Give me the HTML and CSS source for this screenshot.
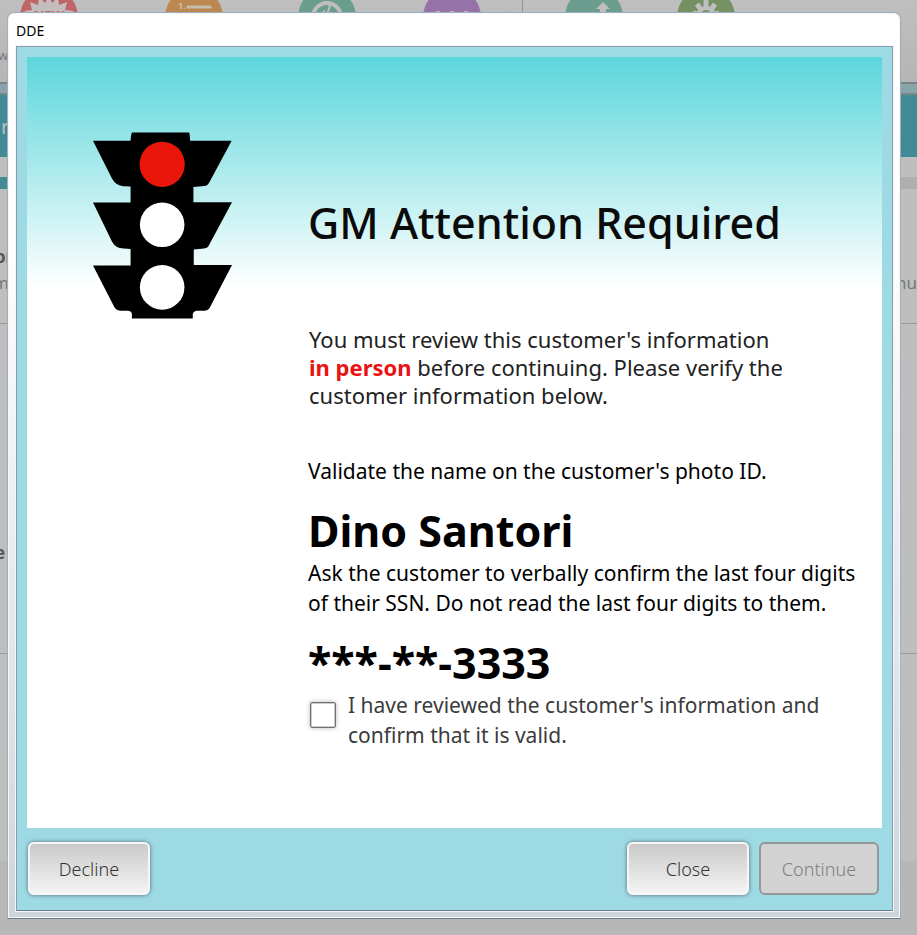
FILE: index.html
```html
<!DOCTYPE html>
<html lang="en">
<head>
<meta charset="utf-8">
<title>DDE</title>
<link rel="stylesheet" href="styles.css">
</head>
<body>
<div class="backdrop" aria-hidden="true">
  <div class="toolbar">
    <div class="tools">
      <svg class="tool" viewBox="0 0 58 58"><circle cx="29" cy="29" r="29" fill="#bf6467"/><path d="M29 8l3 7 6-6 1 8 8-3-2 8 9 1-7 5 7 6-50 0 7-6-7-5 8-1-2-8 8 3 1-8 6 6z" fill="#c4bdbd"/><text x="29" y="32" text-anchor="middle" class="new">NEW</text></svg>
      <svg class="tool" viewBox="0 0 58 58"><circle cx="29" cy="29" r="29" fill="#bd8850"/><text x="13" y="21" class="num">1.</text><path d="M23 19h22M23 31h22" stroke="#c4bdb0" stroke-width="3" stroke-linecap="round"/><text x="13" y="32" class="num">2.</text></svg>
      <svg class="tool" viewBox="0 0 58 58"><circle cx="29" cy="29" r="29" fill="#6b9d8e"/><circle cx="29" cy="29" r="14" fill="none" stroke="#bebebe" stroke-width="4"/><path d="M32 18l-4 11M30 17l3-1M27 23l-2 1" stroke="#bebebe" stroke-width="2"/></svg>
      <svg class="tool" viewBox="0 0 58 58"><circle cx="29" cy="29" r="29" fill="#9672a8"/><g fill="#bebebe"><circle cx="15" cy="28" r="5"/><circle cx="29" cy="28" r="5"/><circle cx="43" cy="28" r="5"/></g></svg>
    </div>
    <div class="tools more">
      <svg class="tool" viewBox="0 0 58 58"><circle cx="29" cy="29" r="29" fill="#6b9d8e"/><path d="M38 14l7 7h-4v12h-6v-12h-4z" fill="#bebebe"/></svg>
      <svg class="tool" viewBox="0 0 58 58"><circle cx="29" cy="29" r="29" fill="#759163"/><circle cx="29" cy="28" r="10" fill="#bebebe"/><path d="M29 10v10M20 16l4 6M38 16l-4 6M16 25l8 2M42 25l-8 2" stroke="#bebebe" stroke-width="5"/><circle cx="29" cy="27" r="5" fill="#759163"/></svg>
    </div>
    <span class="tool-name">w</span>
  </div>
  <div class="stripe"></div>
  <div class="banner">r</div>
  <div class="progress"><span></span></div>
  <div class="section first">
    <strong>or</strong>
    <p><span>m</span><span>nu</span></p>
  </div>
  <div class="section second"><strong>e</strong></div>
  <div class="section third"></div>
  <div class="bottom"></div>
</div>

<div class="window" role="dialog" aria-labelledby="window-title">
  <header class="title" id="window-title">DDE</header>
  <div class="frame">
    <main class="sheet">
      <svg class="light" viewBox="38 36 418 562" role="img" aria-label="Red traffic light">
        <path d="M155 37H327Q329 39 330 62H455L388 187Q383 198 372 198L340 201V247H456L387 376Q383 386 372 386L341 389V436H456L389 564Q383 574 370 573H352Q340 573 338 584V597H155V584Q154 573 143 573H122Q108 573 102 562L38 437H151V388L130 386Q106 386 95 365L38 248H151V200L130 199Q107 198 95 176L38 62H151Q151 46 155 37Z"/>
        <circle cx="246" cy="133" r="68" fill="#ea160b"/>
        <circle cx="246" cy="315" r="67" fill="#fff"/>
        <circle cx="246" cy="503" r="67" fill="#fff"/>
      </svg>
      <div class="copy">
        <h1>GM Attention Required</h1>
        <p class="intro">You must review this customer's information<br><b>in person</b> before continuing. Please verify the<br>customer information below.</p>
        <p class="ask">Validate the name on the customer's photo ID.</p>
        <p class="value">Dino Santori</p>
        <p class="ask">Ask the customer to verbally confirm the last four digits<br>of their SSN. Do not read the last four digits to them.</p>
        <p class="value">***-**-3333</p>
        <div class="confirm">
          <input type="checkbox" id="reviewed">
          <label for="reviewed">I have reviewed the customer's information and<br>confirm that it is valid.</label>
        </div>
      </div>
    </main>
    <footer class="actions">
      <button type="button" class="decline">Decline</button>
      <button type="button">Close</button>
      <button type="button" disabled>Continue</button>
    </footer>
  </div>
</div>
</body>
</html>
```

FILE: styles.css
```css
* { box-sizing: border-box; }

html, body { height: 100%; }

body {
  margin: 0;
  font-family: "Noto Sans", "Open Sans", sans-serif;
  background: #b7b7b7;
  overflow: hidden;
}

h1, p { margin: 0; font-weight: 400; }

.backdrop {
  display: flex;
  flex-direction: column;
  height: 100%;
  background: #bebebe;
  color: #777;
}

.toolbar {
  display: flex;
  position: relative;
  height: 82px;
  flex: none;
  padding-left: 20px;
  background: linear-gradient(#bfbfbf, #b5b5b5);
}
.tools {
  display: grid;
  grid-template-columns: 145px 133px 125px 99px;
  flex: none;
  margin-top: -12px;
}
.tools.more {
  grid-template-columns: 112px 58px;
  border-left: 1px solid #929292;
  padding-left: 42px;
}
.tool { width: 58px; height: 58px; }
.new { font-size: 13px; font-weight: 700; fill: #bf6467; }
.num { font-size: 9px; font-weight: 700; fill: #c4bdb0; }
.tool-name { position: absolute; left: -2px; top: 46px; font-size: 13px; }

.stripe {
  height: 13px;
  flex: none;
  background: #88a4a9;
  border-top: 2px solid #778589;
  border-bottom: 2px solid #77898c;
}
.banner {
  height: 62px;
  flex: none;
  padding: 16px 1px;
  background: #418b96;
  color: #bebebe;
  font-size: 20px;
  line-height: 32px;
}
.progress { height: 12px; flex: none; margin-top: 20px; background: #afafaf; }
.progress span { display: block; width: 50%; height: 100%; background: #418b96; }

.section { flex: none; border-bottom: 1px solid #999; overflow: hidden; }
.section strong { display: block; margin-left: -5px; font-size: 17px; line-height: 24px; color: #555; }
.section p { display: flex; justify-content: space-between; margin-left: -7px; font-size: 17px; line-height: 28px; }
.first { height: 135px; padding-top: 56px; }
.second { height: 330px; padding-top: 217px; }
.third { height: 207px; border: 0; }
.bottom { flex: 1; background: #b7b7b7; }

.window {
  position: absolute;
  inset: 12px 16px 16px 7px;
  display: flex;
  flex-direction: column;
  padding: 0 7px 7px 8px;
  border: 1px solid #9faec0;
  border-bottom-color: #657b92;
  border-radius: 7px 7px 0 0;
  background: linear-gradient(#fff 0%, #fdfdfd 28%, #d0d5dc 100%);
  box-shadow: inset 0 0 0 1px #f4f6f8;
}
.title {
  flex: none;
  height: 33px;
  line-height: 35px;
  font-size: 14px;
  color: #000;
}
.frame {
  flex: 1;
  display: flex;
  flex-direction: column;
  padding: 10px 10px 15px;
  border: 1px solid #8d9baf;
  border-bottom-color: #657b92;
  background: #9edae3;
  box-shadow: 0 0 0 1px #f4f6f8;
}
.sheet {
  flex: 1;
  display: grid;
  grid-template-columns: 139px 1fr;
  column-gap: 76px;
  align-items: start;
  padding: 75px 0 0 66px;
  background: linear-gradient(#5bd6db 0, #fff 230px);
  color: #000;
}
.light { width: 139px; height: 187px; }
.copy { padding-top: 61px; white-space: nowrap; }

h1 { font-size: 43px; line-height: 60px; font-weight: 500; color: #0b0b0b; }
.intro { margin: 72px 0 47px 1px; font-size: 22px; line-height: 28px; color: #222; }
.intro b { color: #e81313; }
.ask { font-size: 21px; line-height: 30px; }
.value { margin: 16px 0 -2px; font-size: 43px; line-height: 58px; font-weight: 700; }

.confirm { display: flex; gap: 12px; color: #3b3b3b; font-size: 21px; line-height: 30px; }
.confirm input {
  appearance: none;
  flex: none;
  width: 26px;
  height: 26px;
  margin: 12px 0 0 2px;
  border: 1px solid #707070;
  border-radius: 2px;
  background: #fff;
  box-shadow: 0 0 5px #bbb, inset 0 0 0 1px #ccc;
}
.confirm input:checked { background: #418b96; }

.actions { display: flex; gap: 10px; flex: none; padding: 14px 3px 0 1px; }
button {
  width: 122px;
  height: 53px;
  border: 2px solid #f6f6f6;
  border-radius: 6px;
  background: linear-gradient(#cacaca, #f4f4f4);
  box-shadow: 0 0 4px #567;
  color: #333;
  font: 300 18px "Noto Sans", "Open Sans", sans-serif;
}
.decline { margin-right: auto; }
button:disabled {
  width: 120px;
  border-color: #929797;
  background: #d3d3d3;
  box-shadow: none;
  color: #808080;
}
```
